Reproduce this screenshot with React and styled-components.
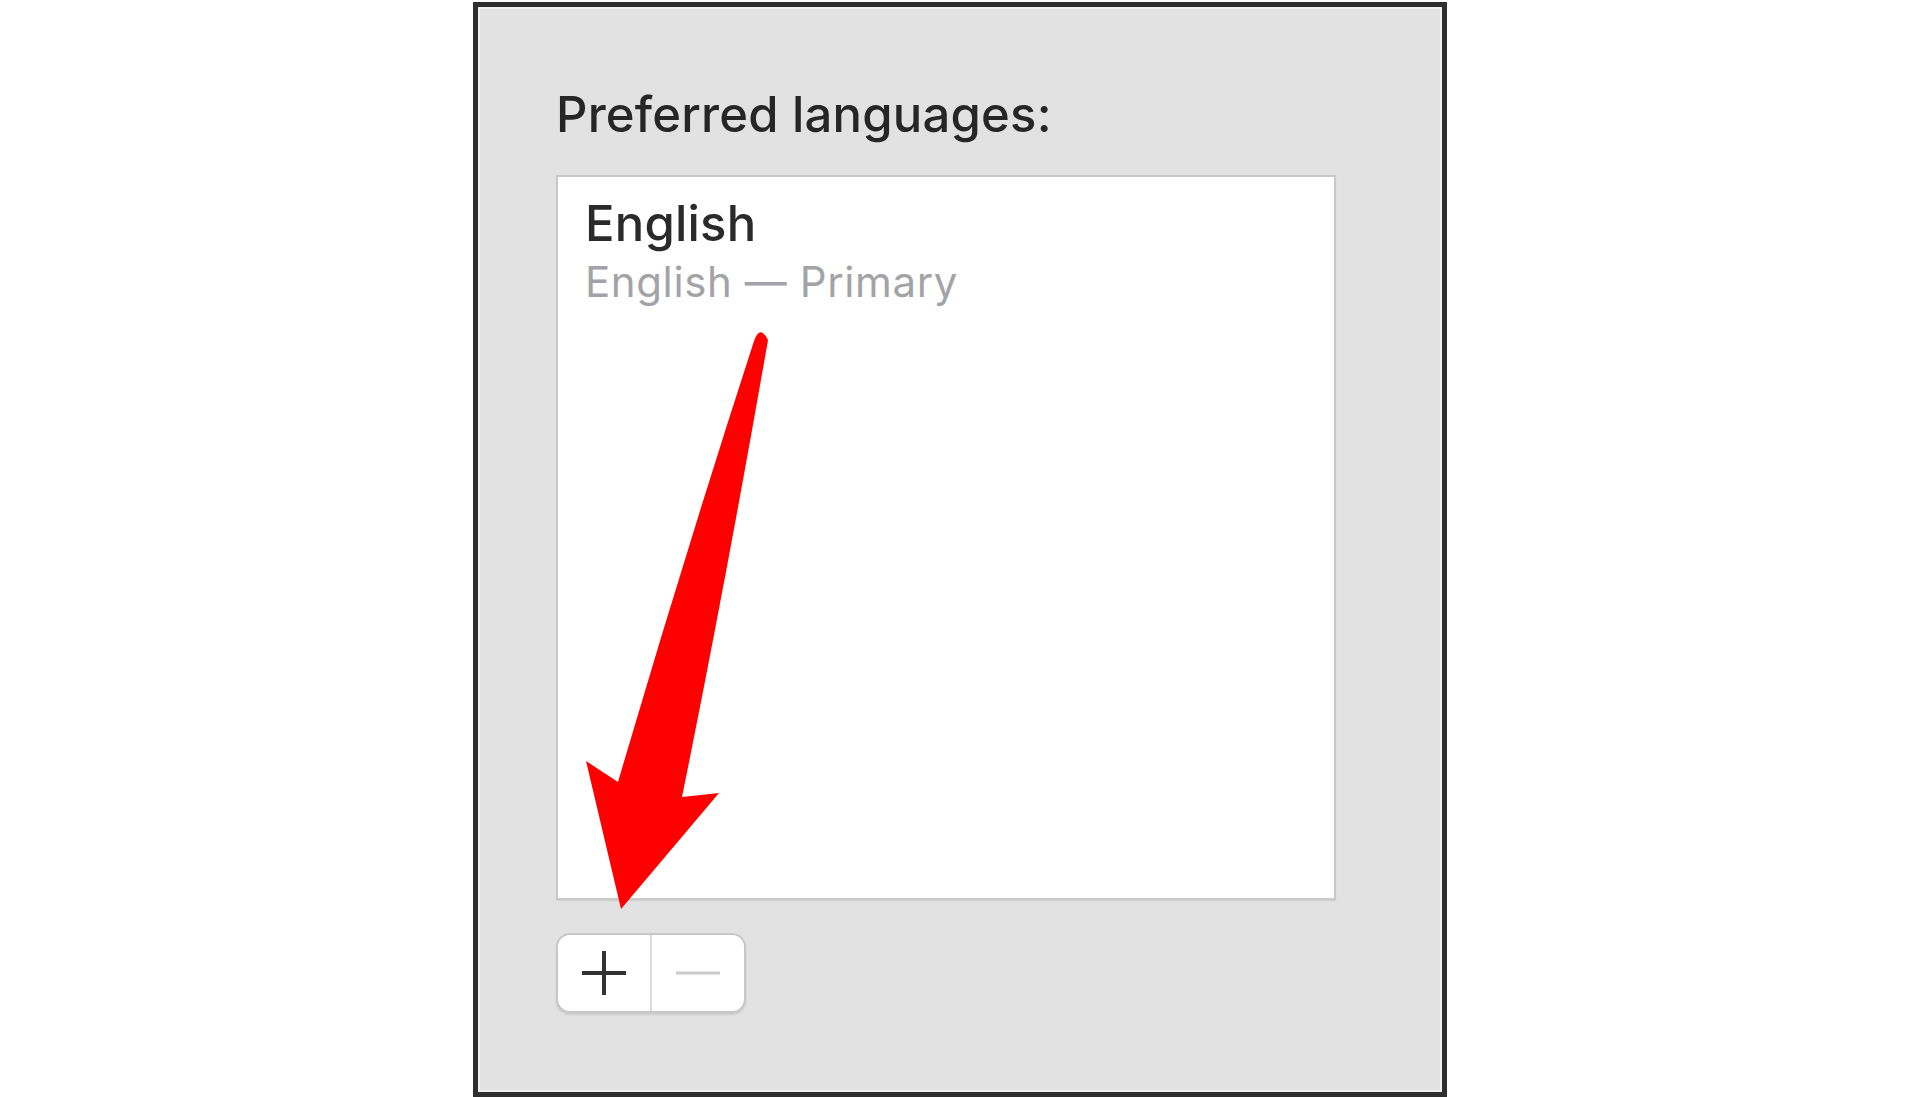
import React from "react";
import styled, { createGlobalStyle } from "styled-components";

const GlobalStyle = createGlobalStyle`
    html, body {
        margin: 0;
        padding: 0;
        background: #ffffff;
    }
    * {
        box-sizing: border-box;
    }
`;

const Page = styled.div`
    width: 1920px;
    height: 1097px;
    overflow: hidden;
    display: flex;
    justify-content: center;
    padding-top: 2px;
    font-family: Inter, "Noto Sans", sans-serif;
`;

const Panel = styled.div`
    position: relative;
    width: 974px;
    height: 1095px;
    background: #e2e2e2;
    border: 5px solid #2e2e2e;
    box-shadow: inset 0 0 0 2px #f0f0f0;
    padding: 78px 0 0 78px;
    display: flex;
    flex-direction: column;
    align-items: flex-start;
`;

const Title = styled.h2`
    margin: 0;
    font-size: 49px;
    font-weight: 500;
    line-height: 60px;
    color: #262626;
    letter-spacing: 0.2px;
`;

const LanguageList = styled.div`
    margin-top: 30px;
    width: 780px;
    height: 725px;
    background: #ffffff;
    border: 2px solid #c9c9c9;
    box-shadow: 0 1px 1px rgba(0, 0, 0, 0.08);
    padding: 19px 27px;
`;

const LanguageItem = styled.div`
    display: flex;
    flex-direction: column;
`;

const LanguageName = styled.span`
    font-size: ${(p) => (p.$sub ? "42px" : "49px")};
    font-weight: ${(p) => (p.$sub ? 400 : 500)};
    line-height: ${(p) => (p.$sub ? "60px" : "56px")};
    letter-spacing: ${(p) => (p.$sub ? "0.6px" : "0.2px")};
    color: ${(p) => (p.$sub ? "#a3a3a7" : "#2a2a2a")};
`;

const ButtonGroup = styled.div`
    margin-top: 33px;
    display: flex;
    height: 80px;
    background: #ffffff;
    border: 2px solid #c8c8c8;
    border-radius: 14px;
    box-shadow: 0 2px 2px rgba(0, 0, 0, 0.1);
    overflow: hidden;
`;

const SegmentButton = styled.button`
    width: ${(p) => p.$width}px;
    height: 100%;
    border: none;
    border-left: ${(p) => (p.$divider ? "2px solid #dcdcdc" : "none")};
    background: transparent;
    padding: 0;
    display: flex;
    align-items: center;
    justify-content: center;
`;

const ArrowOverlay = styled.svg`
    position: absolute;
    left: 103px;
    top: 318px;
    width: 195px;
    height: 590px;
    pointer-events: none;
`;

const PlusIcon = () => (
    <svg width="48" height="48" viewBox="0 0 48 48">
        <path d="M24 2 V46 M2 24 H46" stroke="#333333" strokeWidth="4" fill="none" />
    </svg>
);

const MinusIcon = () => (
    <svg width="44" height="8" viewBox="0 0 44 8">
        <path d="M0 4 H44" stroke="#cbcbcb" strokeWidth="3" fill="none" />
    </svg>
);

const App = () => {
    return (
        <Page>
            <GlobalStyle />
            <Panel>
                <Title>Preferred languages:</Title>
                <LanguageList>
                    <LanguageItem>
                        <LanguageName>English</LanguageName>
                        <LanguageName $sub>English — Primary</LanguageName>
                    </LanguageItem>
                </LanguageList>
                <ButtonGroup>
                    <SegmentButton $width={92}>
                        <PlusIcon />
                    </SegmentButton>
                    <SegmentButton $width={94} $divider>
                        <MinusIcon />
                    </SegmentButton>
                </ButtonGroup>
                <ArrowOverlay viewBox="580 325 195 590">
                    <path
                        d="M753 341 Q759 324 767 340 Q726 575 681 797 L718 793 L620 909 L585 761 L617 782 Q682 560 753 341 Z"
                        fill="#ff0000"
                    />
                </ArrowOverlay>
            </Panel>
        </Page>
    );
};

export default App;
